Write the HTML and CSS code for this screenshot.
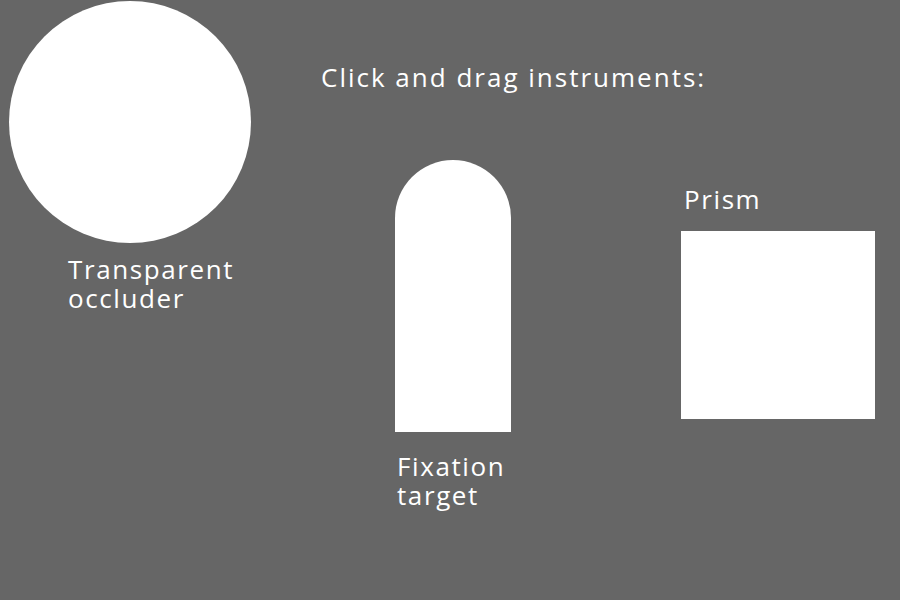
FILE: index.html
```html
<!DOCTYPE html>
<html lang="en">

<head>
    <meta charset="UTF-8">
    <title>Instruments</title>
    <link rel="stylesheet" href="styles.css">
</head>

<body>
    <div class="stage">
        <div class="hint">Click and drag instruments:</div>

        <div class="instrument occluder">
            <div class="occluder-disc"></div>
            <div class="label"><span>Transparent</span><span>occluder</span></div>
        </div>

        <div class="instrument fixation">
            <div class="fixation-shape"></div>
            <div class="label"><span>Fixation</span><span>target</span></div>
        </div>

        <div class="instrument prism">
            <div class="label"><span>Prism</span></div>
            <div class="prism-box"></div>
        </div>
    </div>
</body>

</html>
```

FILE: styles.css
```css
body {
    margin: 0;
    padding: 0;
    background: #666666;
    font-family: "Open Sans", Lato, sans-serif;
    color: #ffffff;
    overflow: hidden;
}

.stage {
    position: relative;
    width: 900px;
    height: 600px;
}

.hint {
    position: absolute;
    left: 321px;
    top: 60px;
    font-size: 26px;
    line-height: 34px;
    letter-spacing: 2px;
}

.instrument {
    position: absolute;
}

.label {
    font-size: 26px;
    line-height: 29px;
    letter-spacing: 1.6px;
}

.label span {
    display: block;
}

/* transparent occluder */
.occluder {
    left: 9px;
    top: 1px;
}

.occluder-disc {
    width: 242px;
    height: 242px;
    border-radius: 50%;
    background: #ffffff;
}

.occluder .label {
    margin: 12px 0 0 59px;
}

/* fixation target */
.fixation {
    left: 395px;
    top: 160px;
}

.fixation-shape {
    width: 116px;
    height: 272px;
    border-radius: 58px 58px 0 0;
    background: #ffffff;
}

.fixation .label {
    margin: 20px 0 0 2px;
}

/* prism */
.prism {
    left: 681px;
    top: 185px;
}

.prism .label {
    margin-left: 3px;
    margin-bottom: 17px;
}

.prism-box {
    width: 194px;
    height: 188px;
    background: #ffffff;
}
```
